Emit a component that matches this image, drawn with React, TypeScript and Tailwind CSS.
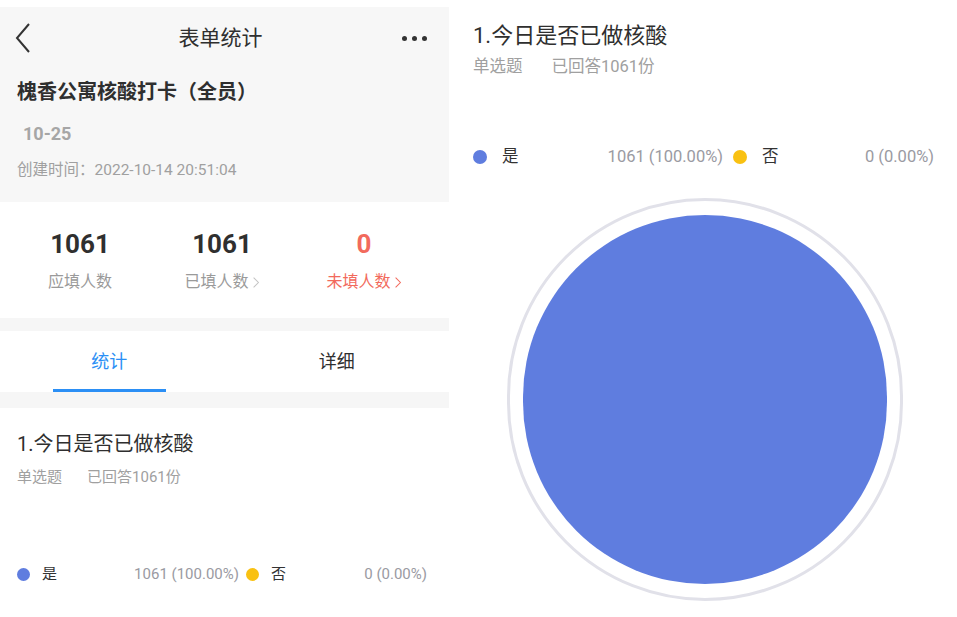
import React from 'react';

const font = { fontFamily: 'Roboto, "Noto Sans CJK SC", sans-serif' };

const Chevron = ({ className }: { className?: string }) => (
  <svg viewBox="0 0 10 16" className={className} fill="none" stroke="currentColor" strokeWidth={1.3}>
    <path d="M2 2l6 6-6 6" />
  </svg>
);

const Stat = ({ value, label, red, arrow }: { value: string; label: string; red?: boolean; arrow?: boolean }) => (
  <div className="flex flex-col items-center">
    <div className={`text-[26px] leading-[32px] font-bold ${red ? 'text-[#f26a5c]' : 'text-[#2f2f2f]'}`}>{value}</div>
    <div className={`mt-[11px] flex items-center text-[16px] leading-[22px] ${red ? 'text-[#f26a5c]' : 'text-[#9a9a9a]'}`}>
      <span>{label}</span>
      {arrow && <Chevron className={`ml-[3px] w-[8px] h-[15px] ${red ? 'text-[#f26a5c]' : 'text-[#c4c4c4]'}`} />}
    </div>
  </div>
);

const Legend = ({ big }: { big?: boolean }) => (
  <div className={`flex items-center ${big ? 'text-[16.5px] leading-[24px]' : 'text-[15px] leading-[22px]'}`}>
    <div className={`flex items-center ${big ? 'w-[250px]' : 'w-[222px]'}`}>
      <span className={`rounded-full bg-[#5f7ddf] ${big ? 'w-[14px] h-[14px]' : 'w-[13px] h-[13px]'}`} />
      <span className={`text-[#333] ${big ? 'ml-[15px]' : 'ml-[12px]'}`}>是</span>
      <span className="ml-auto text-[#9a9aa2]">1061 (100.00%)</span>
    </div>
    <div className={`flex items-center ${big ? 'w-[201px] ml-[10px]' : 'w-[181px] ml-[7px]'}`}>
      <span className={`rounded-full bg-[#f9c112] ${big ? 'w-[14px] h-[14px]' : 'w-[13px] h-[13px]'}`} />
      <span className={`text-[#333] ${big ? 'ml-[15px]' : 'ml-[12px]'}`}>否</span>
      <span className="ml-auto text-[#9a9aa2]">0 (0.00%)</span>
    </div>
  </div>
);

export default function App() {
  return (
    <div className="flex w-[957px] h-[617px] bg-white overflow-hidden" style={font}>
      {/* left: phone view */}
      <div className="w-[449px] flex flex-col pt-[7px]">
        <div className="bg-[#f7f7f7] px-[17px] pb-[21px]">
          <div className="h-[62px] flex items-center justify-between">
            <svg viewBox="0 0 16 30" className="w-[16px] h-[30px] -ml-[2px] text-[#333]" fill="none" stroke="currentColor" strokeWidth={2}>
              <path d="M14 1L2 15l12 14" />
            </svg>
            <div className="text-[21px] leading-[30px] text-[#2f2f2f] ml-[8px]">表单统计</div>
            <div className="flex gap-[5px] mr-[5px]">
              <span className="w-[5px] h-[5px] rounded-full bg-[#333]" />
              <span className="w-[5px] h-[5px] rounded-full bg-[#333]" />
              <span className="w-[5px] h-[5px] rounded-full bg-[#333]" />
            </div>
          </div>
          <div className="mt-[9px] text-[20px] leading-[28px] font-bold text-[#2f2f2f]">槐香公寓核酸打卡（全员）</div>
          <div className="mt-[16px] ml-[6px] text-[18px] leading-[24px] font-bold text-[#a6a6a6]">10-25</div>
          <div className="mt-[13px] text-[15.5px] leading-[22px] text-[#a0a0a0]">创建时间：2022-10-14 20:51:04</div>
        </div>

        <div className="grid grid-cols-3 pl-[9px] pr-[14px] pt-[26px] pb-[25px]">
          <Stat value="1061" label="应填人数" />
          <Stat value="1061" label="已填人数" arrow />
          <Stat value="0" label="未填人数" red arrow />
        </div>

        <div className="h-[13px] bg-[#f6f6f6]" />

        <div className="grid grid-cols-2 pt-[18px]">
          <div className="flex flex-col items-center">
            <div className="text-[18px] leading-[26px] text-[#2b8ff5] -ml-[6px]">统计</div>
            <div className="mt-[14px] h-[3px] w-[113px] bg-[#2b8ff5] -ml-[6px]" />
          </div>
          <div className="flex flex-col items-center">
            <div className="text-[18px] leading-[26px] text-[#2f2f2f]">详细</div>
          </div>
        </div>

        <div className="h-[16px] bg-[#f6f6f6]" />

        <div className="px-[17px] pt-[22px]">
          <div className="text-[20px] leading-[28px] text-[#2f2f2f]">1.今日是否已做核酸</div>
          <div className="mt-[8px] flex gap-[25px] text-[15px] leading-[22px] text-[#a0a0a0]">
            <span>单选题</span>
            <span>已回答1061份</span>
          </div>
          <div className="mt-[75px]">
            <Legend />
          </div>
        </div>
      </div>

      {/* right: chart view */}
      <div className="flex-1 flex flex-col pt-[21px] pl-[24px]">
        <div className="text-[22px] leading-[30px] text-[#2f2f2f]">1.今日是否已做核酸</div>
        <div className="mt-[4px] flex gap-[29px] text-[16.5px] leading-[24px] text-[#a0a0a0]">
          <span>单选题</span>
          <span>已回答1061份</span>
        </div>
        <div className="mt-[66px]">
          <Legend big />
        </div>
        <div className="mt-[29px] ml-[34px] w-[396px] h-[403px] rounded-full border-[3px] border-[#e1e1e9] flex items-center justify-center">
          <div className="w-[364px] h-[369px] rounded-full bg-[#5f7ddf]" />
        </div>
      </div>
    </div>
  );
}
